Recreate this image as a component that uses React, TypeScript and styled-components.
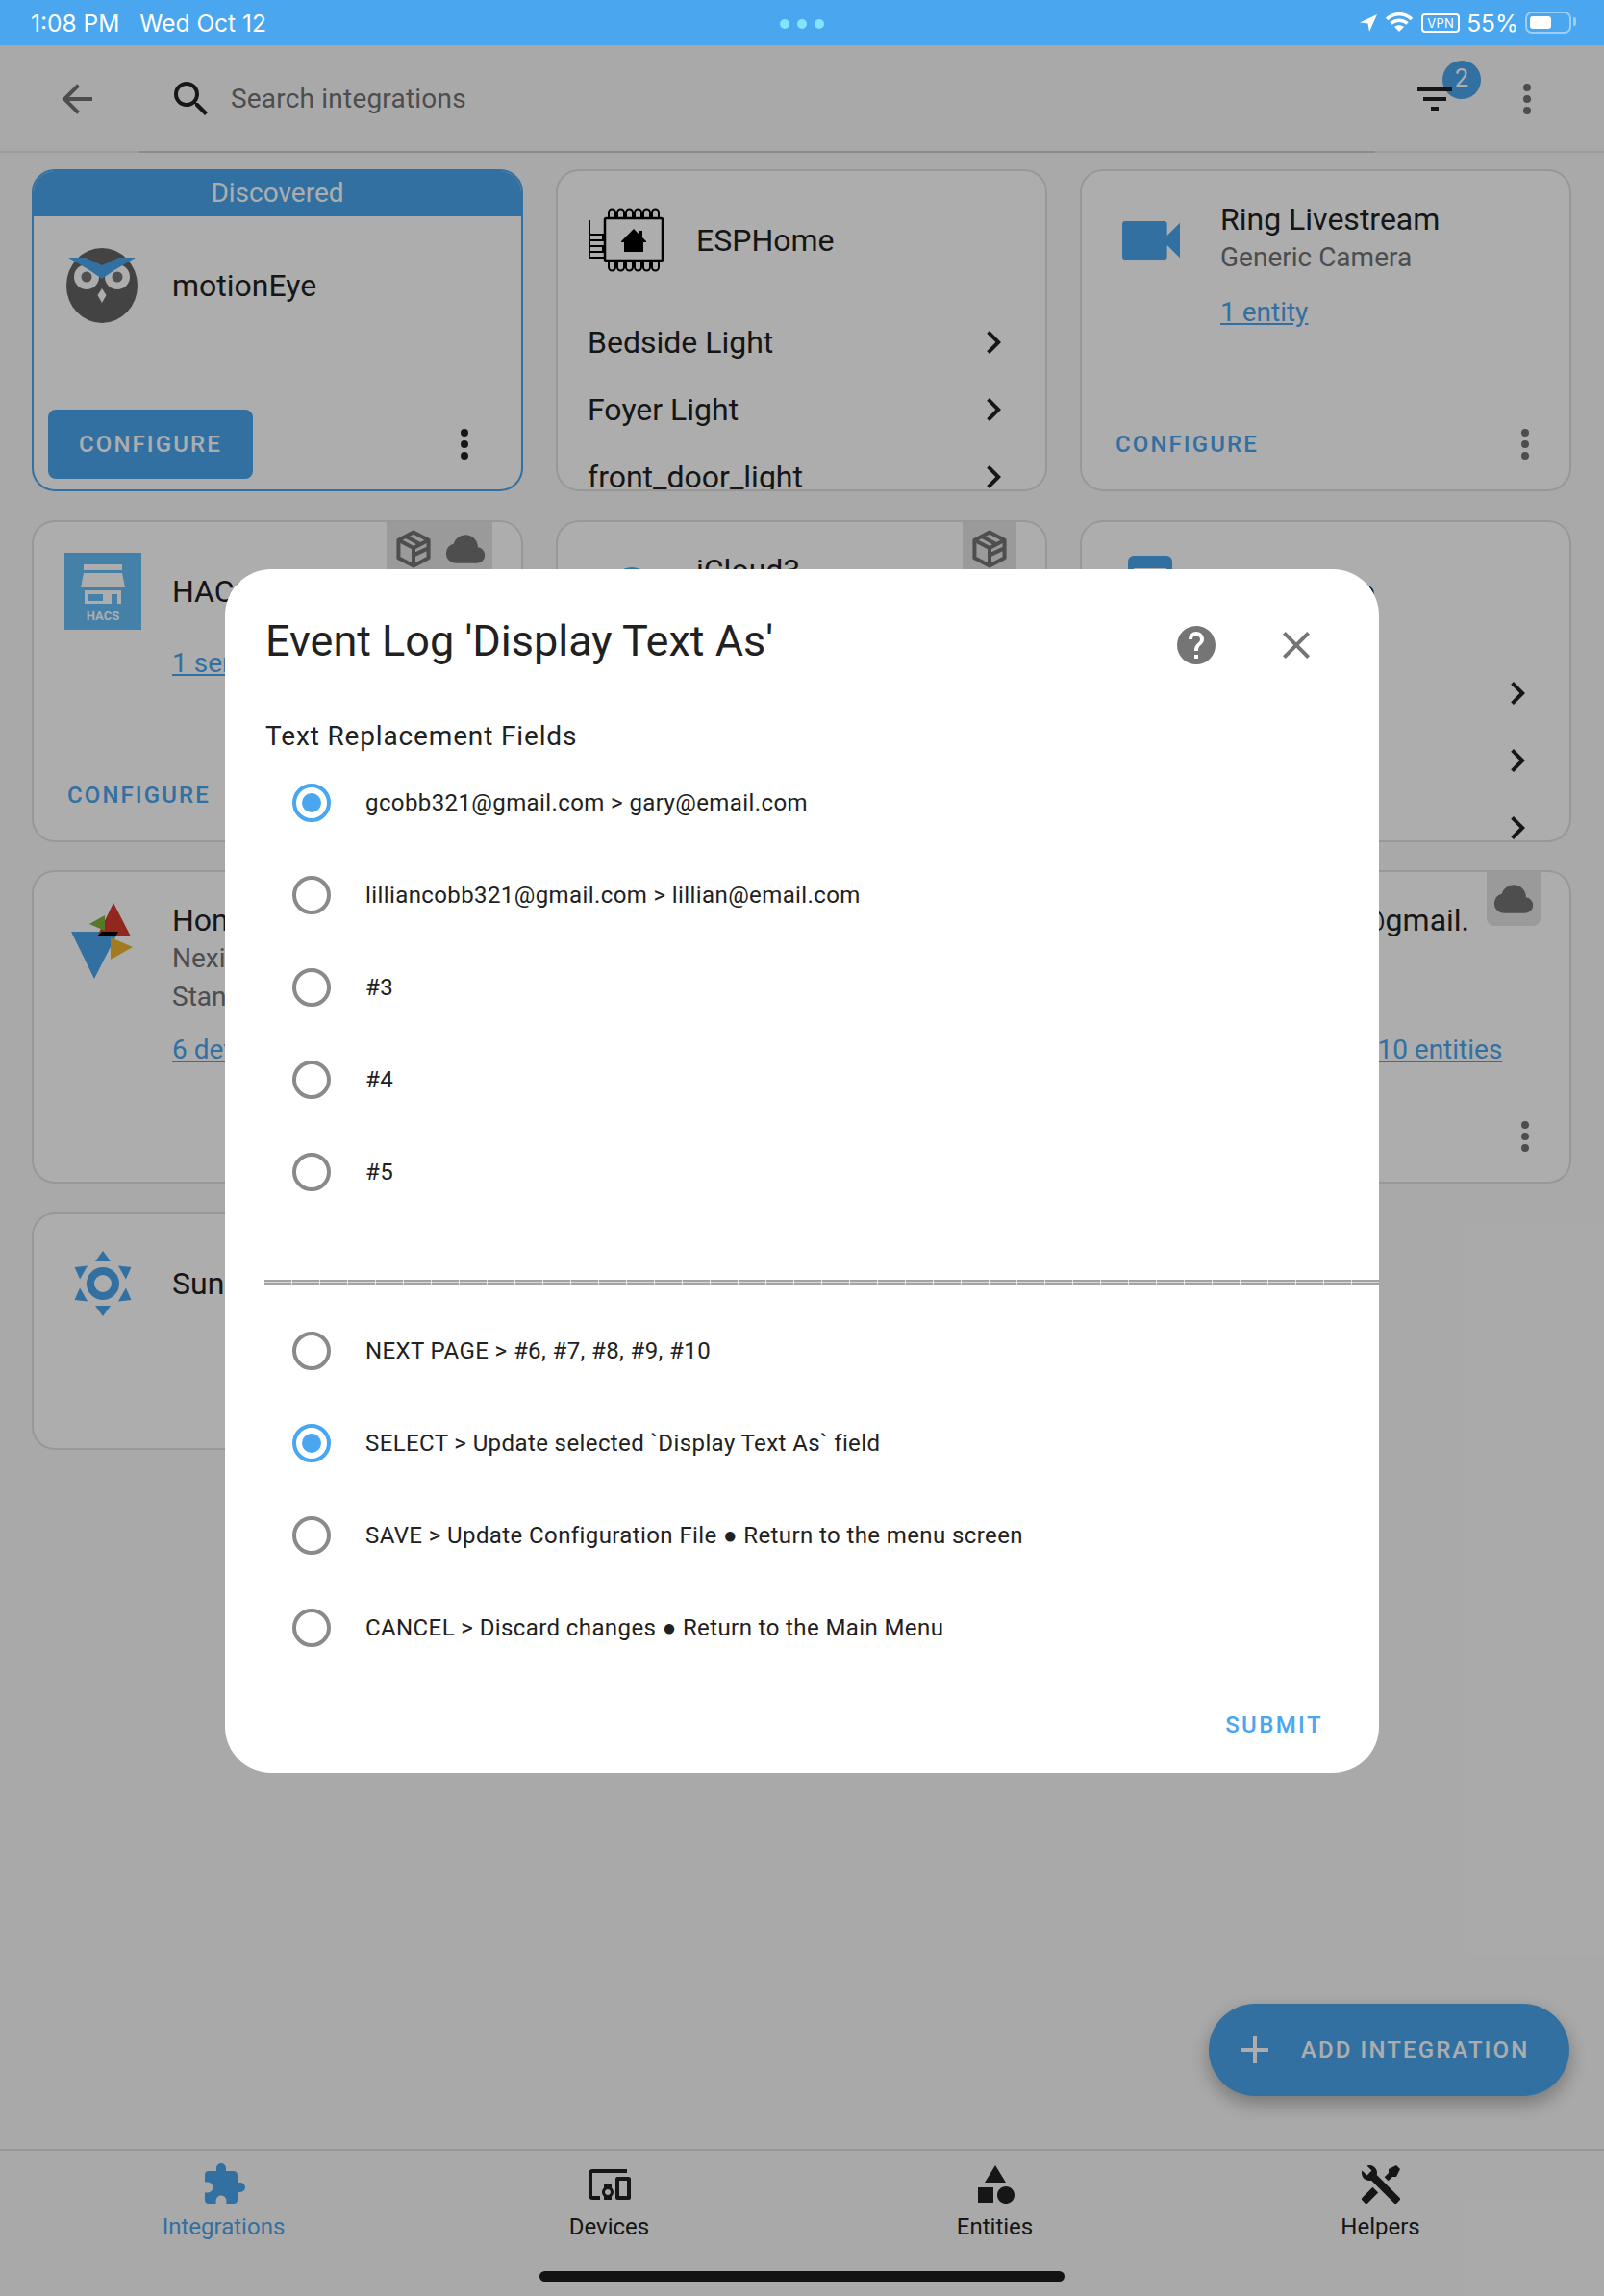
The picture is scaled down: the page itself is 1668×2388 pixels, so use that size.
import styled, { createGlobalStyle } from "styled-components"

const PRIMARY = "#4aa6ee"
const INK = "#212121"
const MUTED = "#727272"

// ─── Icon paths ───────────────────────────────────────────────────────────────

const ICONS = {
  back: "M20,11V13H8L13.5,18.5L12.08,19.92L4.16,12L12.08,4.08L13.5,5.5L8,11H20Z",
  search: "M9.5,3A6.5,6.5 0 0,1 16,9.5C16,11.11 15.41,12.59 14.44,13.73L14.71,14H15.5L20.5,19L19,20.5L14,15.5V14.71L13.73,14.44C12.59,15.41 11.11,16 9.5,16A6.5,6.5 0 0,1 3,9.5A6.5,6.5 0 0,1 9.5,3M9.5,5C7,5 5,7 5,9.5C5,12 7,14 9.5,14C12,14 14,12 14,9.5C14,7 12,5 9.5,5Z",
  filter: "M6,13H18V11H6M3,6V8H21V6M10,18H14V16H10V18Z",
  dots: "M12,16A2,2 0 0,1 14,18A2,2 0 0,1 12,20A2,2 0 0,1 10,18A2,2 0 0,1 12,16M12,10A2,2 0 0,1 14,12A2,2 0 0,1 12,14A2,2 0 0,1 10,12A2,2 0 0,1 12,10M12,4A2,2 0 0,1 14,6A2,2 0 0,1 12,8A2,2 0 0,1 10,6A2,2 0 0,1 12,4Z",
  chevron: "M8.59,16.58L13.17,12L8.59,7.41L10,6L16,12L10,18L8.59,16.58Z",
  help: "M15.07,11.25L14.17,12.17C13.45,12.89 13,13.5 13,15H11V14.5C11,13.39 11.45,12.39 12.17,11.67L13.41,10.41C13.78,10.05 14,9.55 14,9C14,7.89 13.1,7 12,7A2,2 0 0,0 10,9H8A4,4 0 0,1 12,5A4,4 0 0,1 16,9C16,9.88 15.64,10.67 15.07,11.25M13,19H11V17H13M12,2A10,10 0 0,0 2,12A10,10 0 0,0 12,22A10,10 0 0,0 22,12C22,6.47 17.5,2 12,2Z",
  close: "M19,6.41L17.59,5L12,10.59L6.41,5L5,6.41L10.59,12L5,17.59L6.41,19L12,13.41L17.59,19L19,17.59L13.41,12L19,6.41Z",
  plus: "M19,13H13V19H11V13H5V11H11V5H13V11H19V13Z",
  cloud: "M6.5 20Q4.22 20 2.61 18.43 1 16.85 1 14.58 1 12.63 2.17 11.1 3.35 9.57 5.25 9.15 5.88 6.85 7.75 5.43 9.63 4 12 4 14.93 4 16.96 6.04 19 8.07 19 11 20.73 11.2 21.86 12.5 23 13.78 23 15.5 23 17.38 21.69 18.69 20.38 20 18.5 20Z",
  video: "M17,10.5V7A1,1 0 0,0 16,6H4A1,1 0 0,0 3,7V17A1,1 0 0,0 4,18H16A1,1 0 0,0 17,17V13.5L21,17.5V6.5L17,10.5Z",
  puzzle: "M20.5,11H19V7C19,5.89 18.1,5 17,5H13V3.5A2.5,2.5 0 0,0 10.5,1A2.5,2.5 0 0,0 8,3.5V5H4A2,2 0 0,0 2,7V10.8H3.5C5,10.8 6.2,12 6.2,13.5C6.2,15 5,16.2 3.5,16.2H2V20A2,2 0 0,0 4,22H7.8V20.5C7.8,19 9,17.8 10.5,17.8C12,17.8 13.2,19 13.2,20.5V22H17A2,2 0 0,0 19,20V16H20.5A2.5,2.5 0 0,0 23,13.5A2.5,2.5 0 0,0 20.5,11Z",
  devices: "M3 6H21V4H3C1.9 4 1 4.9 1 6V18C1 19.1 1.9 20 3 20H7V18H3V6M13 12H9V13.78C8.39 14.33 8 15.11 8 16C8 16.89 8.39 17.67 9 18.22V20H13V18.22C13.61 17.67 14 16.88 14 16S13.61 14.33 13 13.78V12M11 17.5C10.17 17.5 9.5 16.83 9.5 16S10.17 14.5 11 14.5 12.5 15.17 12.5 16 11.83 17.5 11 17.5M22 8H16C15.5 8 15 8.5 15 9V19C15 19.5 15.5 20 16 20H22C22.5 20 23 19.5 23 19V9C23 8.5 22.5 8 22 8M21 18H17V10H21V18Z",
  shape: "M11,13.5V21.5H3V13.5H11M12,2L17.5,11H6.5L12,2M17.5,13C20,13 22,15 22,17.5C22,20 20,22 17.5,22C15,22 13,20 13,17.5C13,15 15,13 17.5,13Z",
  tools: "M21.71 20.29L20.29 21.71A1 1 0 0 1 18.88 21.71L7 9.85A3.81 3.81 0 0 1 6 10A4 4 0 0 1 2.22 4.7L4.76 7.24L5.29 6.71L6.71 5.29L7.24 4.76L4.7 2.22A4 4 0 0 1 10 6A3.81 3.81 0 0 1 9.85 7L21.71 18.88A1 1 0 0 1 21.71 20.29M2.29 18.88A1 1 0 0 0 2.29 20.29L3.71 21.71A1 1 0 0 0 5.12 21.71L10.59 16.25L7.76 13.42M20 2L16 4V6L13.83 8.17L15.83 10.17L18 8H20L22 4Z",
}

type IconName = keyof typeof ICONS

const Svg = styled.svg<{ $size: number; $color: string }>`
  display: block;
  flex: none;
  width: ${({ $size }) => $size}px;
  height: ${({ $size }) => $size}px;
  fill: ${({ $color }) => $color};
`

function Icon({ name, size = 48, color = INK }: { name: IconName; size?: number; color?: string }) {
  return (
    <Svg viewBox="0 0 24 24" $size={size} $color={color}>
      <path d={ICONS[name]} />
    </Svg>
  )
}

// ─── Logos ────────────────────────────────────────────────────────────────────

const LogoBox = styled.svg`
  display: block;
  flex: none;
  width: 80px;
  height: 80px;
`

function OwlLogo() {
  return (
    <LogoBox viewBox="0 0 80 80">
      <ellipse cx="39" cy="40" rx="37" ry="39" fill="#636363" />
      <circle cx="23" cy="31" r="13" fill="#fff" />
      <circle cx="55" cy="31" r="13" fill="#fff" />
      <circle cx="23" cy="31" r="5.5" fill="#757575" />
      <circle cx="55" cy="31" r="5.5" fill="#757575" />
      <path d="M4 11 L22 11 L39 19 L56 11 L74 11 L52 24 L39 33 L26 24 Z" fill={PRIMARY} />
      <path d="M39 43 L43.5 50 L39 58 L34.5 50 Z" fill="#fff" />
    </LogoBox>
  )
}

function EspLogo() {
  const pins = [24, 33, 42, 51, 60, 69]
  return (
    <LogoBox viewBox="3 0 80 80">
      <g fill="none" stroke="#000" strokeWidth="2">
        <rect x="20" y="17" width="60" height="44" rx="1.5" strokeWidth="2.5" />
        {pins.map((x) => (
          <path key={x} d={`M${x} 17 V11 a3.5 3.5 0 0 1 7 0 V17 M${x} 61 V68 a3.5 3.5 0 0 0 7 0 V61`} />
        ))}
        <path d="M4 19 V58 H20 M4 58 V52 H18 V46 H4 V40 H18 V34 H4" />
      </g>
      <path d="M50 28 L56 34 V30 H59 V37 L63 41 V42 H60 V52 H40 V42 H37 V41 Z" fill="#000" />
    </LogoBox>
  )
}

function HacsLogo() {
  return (
    <LogoBox viewBox="0 0 80 80">
      <rect width="80" height="80" fill="#65bdf6" />
      <rect x="20" y="12" width="40" height="6" fill="#fff" />
      <path d="M20 21 H60 L63 36 H17 Z" fill="#fff" />
      <path d="M21 39 H59 V53 H55 V43 H49 V53 H21 Z M25 43 V50 H40 V43 Z" fill="#fff" fillRule="evenodd" />
      <text x="40" y="70" textAnchor="middle" fontFamily="Roboto, sans-serif" fontWeight="700" fontSize="13" fill="#fff">
        HACS
      </text>
    </LogoBox>
  )
}

function NexiaLogo() {
  return (
    <LogoBox viewBox="0 0 80 80">
      <path d="M7 30 H56 L31 79 Z" fill={PRIMARY} />
      <path d="M51 0 L34 35 H69 Z" fill="#d73a2f" />
      <path d="M26 22 L42 13 V29 Z" fill="#7fb23d" />
      <path d="M48 36 L71 46 L48 59 Z" fill="#f0b430" />
      <path d="M39 30 H56 L53 35 H34 Z" fill="#000" />
    </LogoBox>
  )
}

function SunLogo() {
  return (
    <LogoBox viewBox="0 0 80 80">
      <circle cx="40" cy="40" r="13" fill="none" stroke={PRIMARY} strokeWidth="8" />
      {[0, 60, 120, 180, 240, 300].map((deg) => (
        <path key={deg} d="M40 6 L48 17 H32 Z" fill={PRIMARY} transform={`rotate(${deg} 40 40)`} />
      ))}
    </LogoBox>
  )
}

function MonitorLogo() {
  return (
    <LogoBox viewBox="0 0 80 80">
      <rect x="16" y="3" width="46" height="50" rx="6" fill={PRIMARY} />
      <rect x="22" y="16" width="34" height="26" fill="#fff" />
    </LogoBox>
  )
}

function CircleLogo() {
  return (
    <LogoBox viewBox="0 0 80 80">
      <circle cx="45" cy="35" r="20" fill={PRIMARY} />
    </LogoBox>
  )
}

function PackageGlyph() {
  return (
    <Svg viewBox="0 0 24 24" $size={44} $color="none">
      <g fill="none" stroke="#737373" strokeWidth="2.2" strokeLinejoin="round">
        <path d="M12 2.5 L20.5 7 V17 L12 21.5 L3.5 17 V7 Z" />
        <path d="M3.5 7 L12 11.5 V21.5 M12 11.5 L20.5 7 M7.5 4.8 L16.2 9.5 M12 15.5 L20.5 11.5" />
      </g>
    </Svg>
  )
}

// ─── Global ───────────────────────────────────────────────────────────────────

const GlobalStyle = createGlobalStyle`
  * { box-sizing: border-box; }
  html, body { margin: 0; padding: 0; }
  body { font-family: Roboto, "Liberation Sans", sans-serif; background: #fafafa; }
`

const Screen = styled.div`
  position: relative;
  display: flex;
  flex-direction: column;
  width: 1668px;
  height: 2388px;
  overflow: hidden;
  background: #fafafa;
  color: ${INK};
`

// ─── Status bar ───────────────────────────────────────────────────────────────

const StatusBar = styled.div`
  position: relative;
  flex: none;
  display: flex;
  align-items: center;
  height: 47px;
  padding: 0 34px 0 32px;
  background: ${PRIMARY};
  color: #fff;
  font-family: Inter, Roboto, sans-serif;
  font-size: 24.5px;
`

const StatusTime = styled.span`
  margin-right: 21px;
`

const StatusDots = styled.div`
  position: absolute;
  left: 811px;
  top: 20px;
  display: flex;
  gap: 8px;
`

const StatusDot = styled.i`
  display: block;
  width: 10px;
  height: 10px;
  border-radius: 50%;
  background: #86e3ff;
`

const StatusRight = styled.div`
  display: flex;
  align-items: center;
  margin-left: auto;
`

const WifiGlyph = styled.svg`
  display: block;
  width: 30px;
  height: 24px;
  margin-left: 6px;
`

const VpnTag = styled.span`
  display: block;
  width: 40px;
  height: 20px;
  margin: 0 7px 0 8px;
  border: 2px solid #fff;
  border-radius: 4px;
  font-size: 13px;
  line-height: 16px;
  text-align: center;
  letter-spacing: 0.3px;
`

const BatteryShell = styled.div`
  position: relative;
  width: 48px;
  height: 23px;
  margin-left: 7px;
  padding: 3px;
  border: 2px solid rgba(255, 255, 255, 0.45);
  border-radius: 7px;

  &::after {
    content: "";
    position: absolute;
    right: -7px;
    top: 4px;
    width: 3px;
    height: 9px;
    border-radius: 0 2px 2px 0;
    background: rgba(255, 255, 255, 0.45);
  }
`

const BatteryFill = styled.div`
  width: 22px;
  height: 100%;
  border-radius: 3px;
  background: #fff;
`

// ─── Toolbar ──────────────────────────────────────────────────────────────────

const Toolbar = styled.header`
  flex: none;
  display: flex;
  align-items: center;
  height: 112px;
  padding: 2px 56px 0;
  border-bottom: 2px solid #e6e6e6;
`

const SearchBar = styled.div`
  align-self: stretch;
  display: flex;
  align-items: center;
  width: 1285px;
  margin: 0 38px -2px 41px;
  padding-left: 30px;
  border-bottom: 2px solid #cfcfcf;
`

const SearchText = styled.span`
  margin: 0 0 2px 17px;
  font-size: 28px;
  letter-spacing: 0.2px;
  color: ${MUTED};
`

const FilterButton = styled.div`
  position: relative;
  margin-right: 48px;

  svg {
    position: relative;
  }
`

const FilterBadge = styled.span`
  position: absolute;
  left: 32px;
  top: -16px;
  width: 40px;
  height: 40px;
  border-radius: 50%;
  background: ${PRIMARY};
  color: #fff;
  font-size: 25px;
  line-height: 38px;
  text-align: center;
`

// ─── Cards ────────────────────────────────────────────────────────────────────

const CardGrid = styled.main`
  flex: 1;
  display: grid;
  grid-template-columns: repeat(3, 511px);
  grid-template-rows: 335px 335px 326px 247px;
  column-gap: 34px;
  row-gap: 29.5px;
  padding: 17px 0 0 33px;
  overflow: hidden;
`

const Card = styled.article<{ $selected?: boolean }>`
  position: relative;
  display: flex;
  flex-direction: column;
  min-width: 0;
  overflow: hidden;
  background: #fff;
  border: 2px solid ${({ $selected }) => ($selected ? PRIMARY : "#e0e0e0")};
  border-radius: 24px;
`

const CardBanner = styled.div`
  flex: none;
  height: 47px;
  background: ${PRIMARY};
  color: #fff;
  font-size: 28px;
  line-height: 46px;
  text-align: center;
`

const CardHead = styled.div`
  flex: none;
  display: flex;
  align-items: center;
  gap: 32px;
  padding: 32px 32px 0;

  & > svg {
    align-self: flex-start;
  }
`

const CardInfo = styled.div`
  align-self: flex-start;
  min-width: 0;
  margin-top: -2px;
`

const CardName = styled.div`
  font-size: 32px;
  line-height: 40px;
  white-space: nowrap;
  color: ${INK};
`

const CardMeta = styled.div`
  font-size: 28px;
  line-height: 40px;
  white-space: nowrap;
  color: ${MUTED};
`

const CardLink = styled.a`
  display: block;
  margin: 15px 0 0 144px;
  font-size: 28px;
  line-height: 40px;
  white-space: nowrap;
  color: ${PRIMARY};
  text-decoration: underline;
`

const ItemList = styled.div`
  margin-top: 31px;
  padding: 0 30px 0 31px;
`

const Item = styled.div`
  display: flex;
  align-items: center;
  justify-content: space-between;
  height: 70px;
  font-size: 32px;
  color: ${INK};
`

const CardActions = styled.div<{ $inset: number }>`
  flex: none;
  display: flex;
  align-items: center;
  justify-content: space-between;
  height: 72px;
  margin-top: auto;
  margin-bottom: 11px;
  padding: 0 ${({ $inset }) => $inset}px 0 15px;
`

const ActionButton = styled.button<{ $filled?: boolean }>`
  height: 72px;
  padding: 0 ${({ $filled }) => ($filled ? 32 : 20)}px;
  border: 0;
  border-radius: 8px;
  background: ${({ $filled }) => ($filled ? PRIMARY : "transparent")};
  color: ${({ $filled }) => ($filled ? "#fff" : PRIMARY)};
  font-family: Roboto, sans-serif;
  font-size: 24px;
  font-weight: 500;
  letter-spacing: 2.1px;
`

const Chips = styled.div`
  position: absolute;
  top: 0;
  right: 30px;
  display: flex;
  gap: 10px;
  padding: 6px;
  background: rgba(0, 0, 0, 0.11);
  border-radius: 0 0 8px 8px;
`

// ─── FAB and tabs ─────────────────────────────────────────────────────────────

const Fab = styled.button`
  position: absolute;
  left: 1257px;
  top: 2084px;
  display: flex;
  align-items: center;
  gap: 24px;
  width: 375px;
  height: 96px;
  padding: 0 0 0 24px;
  border: 0;
  border-radius: 48px;
  background: ${PRIMARY};
  color: #fff;
  font-family: Roboto, sans-serif;
  font-size: 24px;
  font-weight: 500;
  letter-spacing: 2.1px;
  box-shadow: 0 8px 20px rgba(0, 0, 0, 0.3);
`

const TabBar = styled.nav`
  flex: none;
  height: 153px;
  padding: 11px 32px 0;
  border-top: 2px solid #e0e0e0;
`

const TabRow = styled.div`
  display: grid;
  grid-template-columns: repeat(4, 401px);
`

const Tab = styled.div<{ $active?: boolean }>`
  display: flex;
  flex-direction: column;
  align-items: center;
  gap: 4px;
  font-size: 24px;
  line-height: 32px;
  color: ${({ $active }) => ($active ? PRIMARY : INK)};
`

const HomeIndicator = styled.div`
  width: 546px;
  height: 11px;
  margin: 30px auto 0;
  border-radius: 6px;
  background: #1d1d1d;
`

// ─── Dialog ───────────────────────────────────────────────────────────────────

const Scrim = styled.div`
  position: absolute;
  inset: 47px 0 0;
  display: flex;
  align-items: center;
  justify-content: center;
  background: rgba(0, 0, 0, 0.32);
`

const Dialog = styled.section`
  width: 1200px;
  height: 1252px;
  padding: 47px 0 0 42px;
  border-radius: 48px;
  background: #fff;
`

const DialogHead = styled.div`
  display: flex;
  align-items: center;
  height: 56px;
  padding-right: 62px;
`

const DialogTitle = styled.h2`
  flex: 1;
  margin: 0;
  font-size: 45px;
  font-weight: 400;
  line-height: 56px;
  color: ${INK};
`

const HeadIcons = styled.div`
  display: flex;
  gap: 56px;
  margin-top: 8px;
`

const FieldLabel = styled.div`
  margin-top: 50px;
  font-size: 28px;
  line-height: 42px;
  letter-spacing: 0.85px;
  color: ${INK};
`

const RadioRow = styled.label`
  display: flex;
  align-items: center;
  gap: 36px;
  height: 96px;
  padding-left: 28px;
  font-size: 24px;
  letter-spacing: 0.4px;
  color: ${INK};
`

const RadioMark = styled.span<{ $checked?: boolean }>`
  flex: none;
  display: flex;
  align-items: center;
  justify-content: center;
  width: 40px;
  height: 40px;
  border: 4px solid ${({ $checked }) => ($checked ? PRIMARY : "#8a8a8a")};
  border-radius: 50%;

  &::after {
    content: "";
    display: ${({ $checked }) => ($checked ? "block" : "none")};
    width: 20px;
    height: 20px;
    border-radius: 50%;
    background: ${PRIMARY};
  }
`

const RuleLine = styled.div`
  height: 5px;
  margin: 64px 0 21px -1px;
  background:
    repeating-linear-gradient(90deg, transparent 0 28px, rgba(255, 255, 255, 0.7) 28px 29px),
    linear-gradient(#a3a3a3 0 2px, #d8d8d8 2px 3px, #a3a3a3 3px 5px);
`

const DialogFoot = styled.div`
  display: flex;
  justify-content: flex-end;
  margin-top: 25px;
  padding-right: 58px;
`

const SubmitButton = styled.button`
  height: 56px;
  padding: 0;
  border: 0;
  background: transparent;
  color: ${PRIMARY};
  font-family: Roboto, sans-serif;
  font-size: 24px;
  font-weight: 500;
  letter-spacing: 2.4px;
`

// ─── Data ─────────────────────────────────────────────────────────────────────

const TOP_FIELDS = [
  { label: "gcobb321@gmail.com > gary@email.com", checked: true },
  { label: "lilliancobb321@gmail.com > lillian@email.com" },
  { label: "#3" },
  { label: "#4" },
  { label: "#5" },
]

const BOTTOM_FIELDS = [
  { label: "NEXT PAGE > #6, #7, #8, #9, #10" },
  { label: "SELECT > Update selected `Display Text As` field", checked: true },
  { label: "SAVE > Update Configuration File ● Return to the menu screen" },
  { label: "CANCEL > Discard changes ● Return to the Main Menu" },
]

const TABS: { name: IconName; label: string; active?: boolean }[] = [
  { name: "puzzle", label: "Integrations", active: true },
  { name: "devices", label: "Devices" },
  { name: "shape", label: "Entities" },
  { name: "tools", label: "Helpers" },
]

function ItemRows({ items }: { items: string[] }) {
  return (
    <ItemList>
      {items.map((item) => (
        <Item key={item}>
          {item}
          <Icon name="chevron" />
        </Item>
      ))}
    </ItemList>
  )
}

function RadioField({ label, checked }: { label: string; checked?: boolean }) {
  return (
    <RadioRow>
      <RadioMark $checked={checked} />
      {label}
    </RadioRow>
  )
}

export default function App() {
  return (
    <Screen>
      <GlobalStyle />

      <StatusBar>
        <StatusTime>1:08 PM</StatusTime>
        Wed Oct 12
        <StatusDots>
          <StatusDot />
          <StatusDot />
          <StatusDot />
        </StatusDots>
        <StatusRight>
          <svg width="22" height="22" viewBox="0 0 22 22" fill="#fff">
            <path d="M20 2 L2 10.5 L10.5 11.5 L12 20 Z" />
          </svg>
          <WifiGlyph viewBox="0 0 30 24">
            <path d="M2 8 C9 1 21 1 28 8 M6.5 12.5 C11 8 19 8 23.5 12.5" fill="none" stroke="#fff" strokeWidth="3.5" />
            <path d="M10 16 C13 13.5 17 13.5 20 16 L15 21 Z" fill="#fff" />
          </WifiGlyph>
          <VpnTag>VPN</VpnTag>
          55%
          <BatteryShell>
            <BatteryFill />
          </BatteryShell>
        </StatusRight>
      </StatusBar>

      <Toolbar>
        <Icon name="back" color={MUTED} />
        <SearchBar>
          <Icon name="search" />
          <SearchText>Search integrations</SearchText>
        </SearchBar>
        <FilterButton>
          <FilterBadge>2</FilterBadge>
          <Icon name="filter" />
        </FilterButton>
        <Icon name="dots" color={MUTED} />
      </Toolbar>

      <CardGrid>
        <Card $selected>
          <CardBanner>Discovered</CardBanner>
          <CardHead>
            <OwlLogo />
            <CardName>motionEye</CardName>
          </CardHead>
          <CardActions $inset={35}>
            <ActionButton $filled>CONFIGURE</ActionButton>
            <Icon name="dots" />
          </CardActions>
        </Card>

        <Card>
          <CardHead>
            <EspLogo />
            <CardName>ESPHome</CardName>
          </CardHead>
          <ItemRows items={["Bedside Light", "Foyer Light", "front_door_light"]} />
        </Card>

        <Card>
          <CardHead>
            <Icon name="video" size={80} color={PRIMARY} />
            <CardInfo>
              <CardName>Ring Livestream</CardName>
              <CardMeta>Generic Camera</CardMeta>
            </CardInfo>
          </CardHead>
          <CardLink>1 entity</CardLink>
          <CardActions $inset={22}>
            <ActionButton>CONFIGURE</ActionButton>
            <Icon name="dots" color={MUTED} />
          </CardActions>
        </Card>

        <Card>
          <Chips>
            <PackageGlyph />
            <Icon name="cloud" size={44} color="#737373" />
          </Chips>
          <CardHead>
            <HacsLogo />
            <CardName>HACS</CardName>
          </CardHead>
          <CardLink>1 service</CardLink>
          <CardActions $inset={22}>
            <ActionButton>CONFIGURE</ActionButton>
            <Icon name="dots" color={MUTED} />
          </CardActions>
        </Card>

        <Card>
          <Chips>
            <PackageGlyph />
          </Chips>
          <CardHead>
            <CircleLogo />
            <CardInfo>
              <CardName>iCloud3</CardName>
            </CardInfo>
          </CardHead>
        </Card>

        <Card>
          <CardHead>
            <MonitorLogo />
            <CardName>UniFi Video</CardName>
          </CardHead>
          <ItemRows items={["Back Door", "Driveway", "Front Door"]} />
        </Card>

        <Card>
          <CardHead>
            <NexiaLogo />
            <CardInfo>
              <CardName>Honeywell</CardName>
              <CardMeta>Nexia</CardMeta>
              <CardMeta>Standard</CardMeta>
            </CardInfo>
          </CardHead>
          <CardLink>6 devices</CardLink>
        </Card>

        <Card />

        <Card>
          <Chips>
            <Icon name="cloud" size={44} color="#737373" />
          </Chips>
          <CardHead>
            <Icon name="shape" size={80} color={PRIMARY} />
            <CardInfo>
              <CardName>gcobb321@gmail.</CardName>
              <CardName>com</CardName>
              <CardMeta>Google</CardMeta>
            </CardInfo>
          </CardHead>
          <CardLink>1 device and 10 entities</CardLink>
          <CardActions $inset={22}>
            <span />
            <Icon name="dots" color={MUTED} />
          </CardActions>
        </Card>

        <Card>
          <CardHead>
            <SunLogo />
            <CardName>Sun</CardName>
          </CardHead>
        </Card>
      </CardGrid>

      <TabBar>
        <TabRow>
          {TABS.map((tab) => (
            <Tab key={tab.label} $active={tab.active}>
              <Icon name={tab.name} color={tab.active ? PRIMARY : INK} />
              {tab.label}
            </Tab>
          ))}
        </TabRow>
        <HomeIndicator />
      </TabBar>

      <Fab>
        <Icon name="plus" color="#fff" />
        ADD INTEGRATION
      </Fab>

      <Scrim>
        <Dialog>
          <DialogHead>
            <DialogTitle>Event Log 'Display Text As'</DialogTitle>
            <HeadIcons>
              <Icon name="help" color="#757575" />
              <Icon name="close" color="#757575" />
            </HeadIcons>
          </DialogHead>
          <FieldLabel>Text Replacement Fields</FieldLabel>
          {TOP_FIELDS.map((field) => (
            <RadioField key={field.label} label={field.label} checked={field.checked} />
          ))}
          <RuleLine />
          {BOTTOM_FIELDS.map((field) => (
            <RadioField key={field.label} label={field.label} checked={field.checked} />
          ))}
          <DialogFoot>
            <SubmitButton>SUBMIT</SubmitButton>
          </DialogFoot>
        </Dialog>
      </Scrim>
    </Screen>
  )
}
